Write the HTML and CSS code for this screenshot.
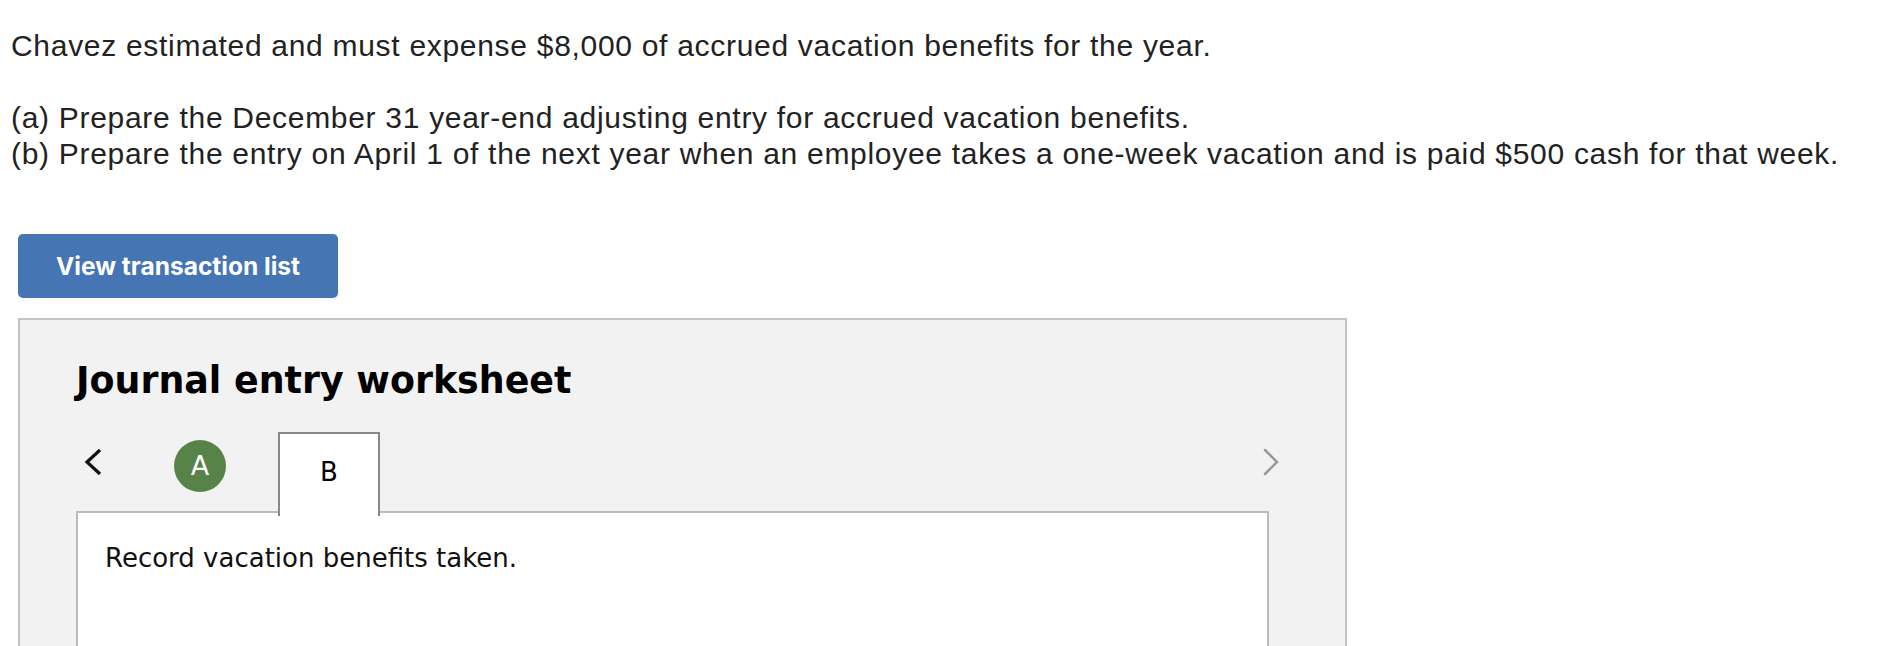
FILE: index.html
```html
<!DOCTYPE html>
<html lang="en">
<head>
    <meta charset="UTF-8">
    <meta name="viewport" content="width=device-width, initial-scale=1.0">
    <title>Journal entry worksheet</title>
    <link rel="stylesheet" href="styles.css">
</head>
<body>
    <!-- Условие задачи -->
    <div class="question">
        <p>Chavez estimated and must expense $8,000 of accrued vacation benefits for the year.</p>
        <p>(a) Prepare the December 31 year-end adjusting entry for accrued vacation benefits.<br>
        (b) Prepare the entry on April 1 of the next year when an employee takes a one-week vacation and is paid $500 cash for that week.</p>
    </div>

    <button class="btn-list">View transaction list</button>

    <!-- Рабочий лист проводок -->
    <div class="worksheet">
        <h2>Journal entry worksheet</h2>

        <div class="tabs">
            <span class="nav prev">
                <svg width="18" height="28" viewBox="0 0 18 28"><polyline points="16,2 3,14 16,26" fill="none" stroke="#111" stroke-width="3.2"/></svg>
            </span>
            <span class="step done">A</span>
            <span class="tab active">B</span>
            <span class="nav next">
                <svg width="18" height="28" viewBox="0 0 18 28"><polyline points="2,2 14,14 2,26" fill="none" stroke="#999" stroke-width="2.5" stroke-linecap="round"/></svg>
            </span>
        </div>

        <div class="entry-box">
            <p>Record vacation benefits taken.</p>
        </div>
    </div>
</body>
</html>
```

FILE: styles.css
```css
body {
    margin: 0;
    padding: 28px 0 0 11px;
    font-family: "Liberation Sans", Arial, sans-serif;
    color: #222;
}
.question p {
    margin: 0 0 36px;
    font-size: 30px;
    line-height: 36px;
    letter-spacing: 0.7px;
}
.question p:last-child {
    margin-bottom: 62px;
}
.btn-list {
    display: block;
    margin-left: 7px;
    width: 320px;
    height: 64px;
    background-color: #4675b3;
    color: white;
    border: none;
    border-radius: 5px;
    font-family: Inter, Roboto, sans-serif;
    font-weight: bold;
    font-size: 24.5px;
    cursor: pointer;
}
.worksheet {
    margin: 20px 0 0 7px;
    width: 1329px;
    height: 400px;
    background-color: #f2f2f2;
    border: 2px solid #c4c4c4;
    padding: 41px 76px 0 56px;
    box-sizing: border-box;
    font-family: "DejaVu Sans", Verdana, sans-serif;
}
.worksheet h2 {
    margin: 0;
    font-size: 36.4px;
    line-height: 40px;
    color: #000;
}
.tabs {
    display: flex;
    align-items: flex-start;
    height: 81px;
    margin: 31px -12px 0 0;
    position: relative;
    z-index: 1;
}
.nav {
    margin-top: 16px;
    height: 28px;
}
.prev {
    margin-left: 8px;
}
.next {
    margin-left: auto;
}
.step {
    width: 52px;
    height: 52px;
    margin: 8px 0 0 72px;
    border-radius: 50%;
    background-color: #578349;
    color: white;
    font-size: 27px;
    line-height: 52px;
    text-align: center;
}
.tab {
    width: 98px;
    height: 82px;
    margin-left: 52px;
    background-color: white;
    border: 2px solid #888;
    border-bottom: none;
    font-size: 26px;
    line-height: 76px;
    text-align: center;
    color: #000;
    box-sizing: content-box;
}
.entry-box {
    margin-top: -2px;
    height: 200px;
    background-color: white;
    border: 2px solid #bbb;
    padding: 30px 27px;
}
.entry-box p {
    margin: 0;
    font-size: 26px;
    color: #111;
}
```
